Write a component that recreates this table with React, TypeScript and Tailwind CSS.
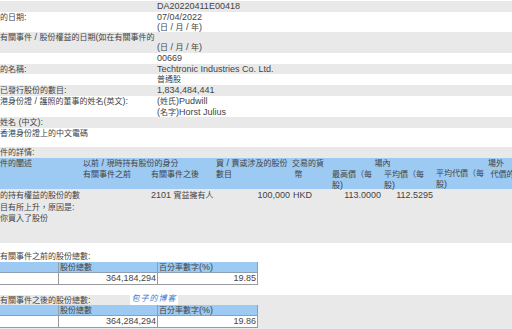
import React from 'react'

const font = { fontFamily: '"Liberation Sans", "Noto Sans CJK TC", sans-serif' }

// CJK glyphs render a bit smaller than latin in the source page
const CJK = /([\u3000-\u9fff\uff00-\uffef]+)/
function T({ s }: { s: string }) {
  return (
    <>
      {s.split(CJK).map((p, i) =>
        i % 2 === 1 ? <span key={i} className="text-[8px]">{p}</span> : p
      )}
    </>
  )
}

function Row({ label, value, bg, h }: { label?: string; value?: React.ReactNode; bg: 'g' | 'w'; h: string }) {
  return (
    <div className={`grid grid-cols-[157px_1fr] ${h} ${bg === 'g' ? 'bg-[#e9e9e9]' : 'bg-white'}`}>
      <div className="whitespace-nowrap">{label && <T s={label} />}</div>
      <div className="whitespace-nowrap">{typeof value === 'string' ? <T s={value} /> : value}</div>
    </div>
  )
}

function TotalTable({ shares, pct }: { shares: string; pct: string }) {
  return (
    <div className="w-[258px] grid grid-cols-[58px_99px_101px]">
      <div className="h-[11px] bg-[#9ccaf2] border-b border-[#8e9fb3]" />
      <div className="h-[11px] bg-[#9ccaf2] border-l border-b border-[#8e9fb3] pl-px"><T s="股份總數" /></div>
      <div className="h-[11px] bg-[#9ccaf2] border-l border-r border-b border-[#8e9fb3] pl-px"><T s="百分率數字(%)" /></div>
      <div className="h-[12px] bg-white border-b border-[#9a9a9a]" />
      <div className="h-[12px] bg-white border-l border-b border-[#9a9a9a] text-right pr-px">{shares}</div>
      <div className="h-[12px] bg-white border-l border-r border-b border-[#9a9a9a] text-right pr-px">{pct}</div>
    </div>
  )
}

export default function App() {
  return (
    <div className="w-[512px] h-[329px] overflow-hidden bg-white text-[9px] leading-[10px] text-[#444] relative" style={font}>
      <div className="h-px bg-white" />
      <Row bg="g" h="h-[11px]" value="DA20220411E00418" />
      <Row bg="w" h="h-[20px]" label="的日期:" value={<>07/04/2022<br /><T s="(日 / 月 / 年)" /></>} />
      <Row bg="g" h="h-[21px]" label="有關事件 / 股份權益的日期(如在有關事件的" value={<><br /><T s="(日 / 月 / 年)" /></>} />
      <Row bg="w" h="h-[11px]" value="00669" />
      <Row bg="g" h="h-[10px]" label="的名稱:" value="Techtronic Industries Co. Ltd." />
      <Row bg="w" h="h-[11px]" value="普通股" />
      <Row bg="g" h="h-[11px]" label="已發行股份的數目:" value="1,834,484,441" />
      <Row bg="w" h="h-[21px]" label="港身份證 / 護照的董事的姓名(英文):" value={<><T s="(姓氏)" />Pudwill<br /><T s="(名字)" />Horst Julius</>} />
      <Row bg="g" h="h-[11px]" label="姓名 (中文):" />
      <Row bg="w" h="h-[19px]" label="香港身份證上的中文電碼" />
      <Row bg="g" h="h-[11px]" label="件的詳情:" />

      {/* header of the event table */}
      <div className="grid grid-cols-[83px_68px_65px_76px_38px_54px_51px_52px_25px] bg-[#9ccaf2] h-[31px] whitespace-nowrap">
        <div><T s="件的闡述" /></div>
        <div className="col-span-2">
          <div><T s="以前 / 現時持有股份的身分" /></div>
          <div className="grid grid-cols-[68px_65px]">
            <div><T s="有關事件之前" /></div>
            <div><T s="有關事件之後" /></div>
          </div>
        </div>
        <div><T s="買 / 賣或涉及的股份" /><br /><T s="數目" /></div>
        <div><T s="交易的貨" /><br />&nbsp;<T s="幣" /></div>
        <div className="col-span-2">
          <div className="text-center"><T s="場內" /></div>
          <div className="grid grid-cols-[54px_51px]">
            <div className="pl-[2px]"><T s="最高價（每" /><br /><T s="股)" /></div>
            <div><T s="平均價（每" /><br /><T s="股)" /></div>
          </div>
        </div>
        <div className="pl-px"><br /><T s="平均代價（每" /><br /><T s="股)" /></div>
        <div className="pl-px"><T s="場外" /><br />&nbsp;<T s="代價的" /></div>
      </div>

      <div className="grid grid-cols-[83px_68px_65px_76px_38px_54px_51px_52px_25px] bg-[#e9e9e9] h-[54px] whitespace-nowrap leading-[10.5px] pt-px">
        <div>
          <T s="的持有權益的股份的數" /><br /><T s="目有所上升，原因是:" /><br /><T s="你買入了股份" />
        </div>
        <div />
        <div>2101 <T s="實益擁有人" /></div>
        <div className="text-right pr-[2px]">100,000</div>
        <div className="pl-px">HKD</div>
        <div className="text-right pr-[3px]">113.0000</div>
        <div className="text-right pr-[2px]">112.5295</div>
        <div />
        <div />
      </div>

      <div className="bg-white h-[52px] pt-[8px]">
        <div className="h-[11px] whitespace-nowrap"><T s="有關事件之前的股份總數:" /></div>
        <TotalTable shares="364,184,294" pct="19.85" />
      </div>

      <div className="bg-[#e9e9e9] h-[40px]">
        <div className="h-[10px] whitespace-nowrap"><T s="有關事件之後的股份總數:" /></div>
        <TotalTable shares="364,284,294" pct="19.86" />
      </div>

      {/* watermark overlay */}
      <div className="absolute left-[130px] top-[291px] w-[48px] h-[14px] bg-white flex items-center justify-center">
        <span className="text-[8px] italic text-[#3a7bd5] tracking-[1px] leading-none" style={{ fontFamily: '"Noto Sans CJK SC", sans-serif' }}>包子的博客</span>
      </div>
    </div>
  )
}
